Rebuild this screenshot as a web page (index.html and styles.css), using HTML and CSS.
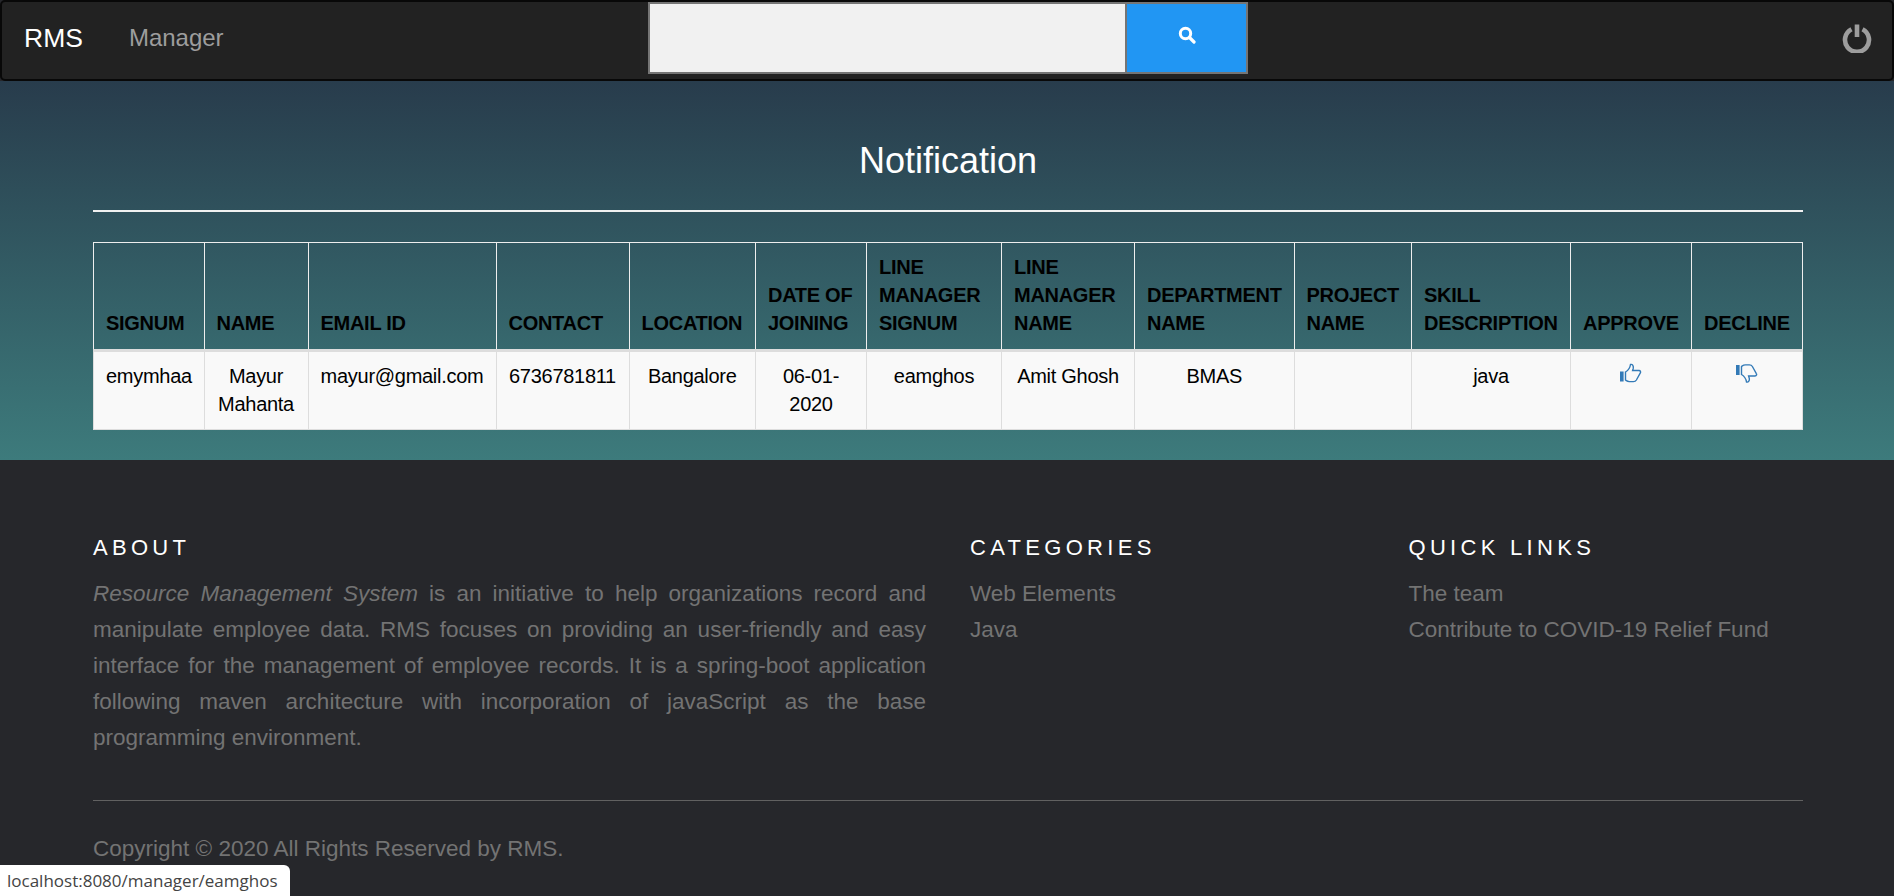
FILE: index.html
```html
<!DOCTYPE html>
<html lang="en">
<head>
    <meta charset="UTF-8">
    <meta name="viewport" content="width=device-width, initial-scale=1.0">
    <title>Notification</title>
    <link rel="stylesheet" href="styles.css">
</head>
<body>
    <nav class="navbar">
        <div class="nav-left">
            <a class="brand" href="#">RMS</a>
            <a class="nav-link" href="#">Manager</a>
        </div>
        <form class="search">
            <input class="search-input" type="text" aria-label="Search">
            <button class="search-btn" type="button" aria-label="Search">
                <svg class="search-icon" viewBox="0 0 18 18">
                    <circle cx="7.5" cy="7.5" r="5.2" fill="none" stroke="#fff" stroke-width="3"/>
                    <path d="M11.5 11.5L16 16" stroke="#fff" stroke-width="3.2" stroke-linecap="round"/>
                </svg>
            </button>
        </form>
        <a class="power" href="#" aria-label="Log out">
            <svg class="power-icon" viewBox="0 0 30 30">
                <path d="M9.5 6.2a12 12 0 1 0 11 0" fill="none" stroke="#9d9d9d" stroke-width="4.6"/>
                <path d="M15 1.5V14" stroke="#9d9d9d" stroke-width="4.6"/>
            </svg>
        </a>
    </nav>

    <main class="content">
        <h1 class="title">Notification</h1>
        <hr class="title-line">
        <table class="notif-table">
            <thead>
                <tr>
                    <th>SIGNUM</th>
                    <th>NAME</th>
                    <th>EMAIL ID</th>
                    <th>CONTACT</th>
                    <th>LOCATION</th>
                    <th>DATE OF JOINING</th>
                    <th>LINE MANAGER SIGNUM</th>
                    <th>LINE MANAGER NAME</th>
                    <th>DEPARTMENT NAME</th>
                    <th>PROJECT NAME</th>
                    <th>SKILL DESCRIPTION</th>
                    <th>APPROVE</th>
                    <th>DECLINE</th>
                </tr>
            </thead>
            <tbody>
                <tr>
                    <td>emymhaa</td>
                    <td>Mayur Mahanta</td>
                    <td>mayur@gmail.com</td>
                    <td>6736781811</td>
                    <td>Bangalore</td>
                    <td>06-01-2020</td>
                    <td>eamghos</td>
                    <td>Amit Ghosh</td>
                    <td>BMAS</td>
                    <td></td>
                    <td>java</td>
                    <td>
                        <a class="thumb" href="#" aria-label="Approve">
                            <svg viewBox="0 0 22 20">
                                <rect x="0" y="8.5" width="3.6" height="10" fill="#337ab7"/>
                                <path d="M5.5 9C8 7.5 10 5 10.5 1.5C12.5 1 13.8 3 13.2 5.5L12.6 7.5H19C20.6 7.5 21 9 20.2 10.2L16.4 17C15.8 18 14.8 18.6 13.4 18.6H9.4C7.4 18.6 6.4 17.6 5.5 17Z" fill="none" stroke="#337ab7" stroke-width="1.4"/>
                            </svg>
                        </a>
                    </td>
                    <td>
                        <a class="thumb" href="#" aria-label="Decline">
                            <svg viewBox="0 0 22 20">
                                <rect x="0" y="2" width="3.6" height="10" fill="#337ab7"/>
                                <path d="M5.5 11.5C8 13 10 15.5 10.5 19C12.5 19.5 13.8 17.5 13.2 15L12.6 13H19C20.6 13 21 11.5 20.2 10.3L16.4 3.5C15.8 2.5 14.8 1.9 13.4 1.9H9.4C7.4 1.9 6.4 2.9 5.5 3.5Z" fill="none" stroke="#337ab7" stroke-width="1.4"/>
                            </svg>
                        </a>
                    </td>
                </tr>
            </tbody>
        </table>
    </main>

    <footer class="site-footer">
        <div class="footer-cols">
            <div>
                <h6 class="footer-head">About</h6>
                <p class="about-text"><i>Resource Management System</i> is an initiative to help organizations record and manipulate employee data. RMS focuses on providing an user-friendly and easy interface for the management of employee records. It is a spring-boot application following maven architecture with incorporation of javaScript as the base programming environment.</p>
            </div>
            <div>
                <h6 class="footer-head">Categories</h6>
                <ul class="footer-links">
                    <li><a href="#">Web Elements</a></li>
                    <li><a href="#">Java</a></li>
                </ul>
            </div>
            <div>
                <h6 class="footer-head">Quick Links</h6>
                <ul class="footer-links">
                    <li><a href="#">The team</a></li>
                    <li><a href="#">Contribute to COVID-19 Relief Fund</a></li>
                </ul>
            </div>
        </div>
        <hr class="footer-line">
        <p class="copyright">Copyright © 2020 All Rights Reserved by RMS.</p>
    </footer>

    <!-- browser status bubble -->
    <div class="status-url">localhost:8080/manager/eamghos</div>
</body>
</html>
```

FILE: styles.css
```css
* {
    box-sizing: border-box;
}

html, body {
    height: 100%;
}

body {
    font-family: 'Liberation Sans', Arial, sans-serif;
    font-size: 20px;
    line-height: 28px;
    margin: 0;
    padding: 0;
    background-color: #26272b;
    overflow: hidden;
}

a {
    text-decoration: none;
}

.navbar {
    display: flex;
    align-items: center;
    position: relative;
    height: 81px;
    background-color: #222;
    border: 2px solid #080808;
    border-radius: 5px;
}

.nav-left {
    display: flex;
    align-items: center;
    width: 646px;
    padding-left: 22px;
    padding-bottom: 5px;
}

.brand {
    color: #fff;
    font-size: 26.5px;
}

.nav-link {
    color: #9d9d9d;
    font-size: 24px;
    margin-left: 46px;
}

.search {
    display: flex;
    width: 600px;
    height: 72px;
    margin-top: -6px;
    border: 2px solid #757575;
}

.search-input {
    flex: 1;
    border: none;
    border-right: 2px solid #757575;
    background-color: #f1f1f1;
    padding: 0;
}

.search-btn {
    display: flex;
    align-items: center;
    justify-content: center;
    width: 119px;
    padding: 0 0 6px;
    border: none;
    background-color: #2196f3;
}

.search-icon {
    width: 18px;
    height: 18px;
}

.power {
    display: flex;
    margin-left: auto;
    margin-right: 20px;
    margin-top: -5px;
}

.power-icon {
    width: 30px;
    height: 30px;
}

.content {
    height: 379px;
    padding: 54px 91px 0 93px;
    background: linear-gradient(#283c4c, #3d7b7c);
}

.title {
    margin: 0;
    color: #fff;
    font-size: 36px;
    font-weight: 400;
    line-height: 52px;
    text-align: center;
}

.title-line {
    margin: 23px 0 30px;
    border: none;
    border-top: 2px solid #f1f1f1;
}

.notif-table {
    width: 1709px;
    table-layout: fixed;
    border-collapse: collapse;
    color: #000;
    letter-spacing: -0.28px;
}

.notif-table th {
    padding: 10px 11px 12px 12px;
    border: 1px solid #eee;
    border-bottom: 3px solid #ddd;
    font-weight: 700;
    text-align: left;
    vertical-align: bottom;
}

.notif-table th:nth-child(1) { width: 110.5px; }
.notif-table th:nth-child(2) { width: 104px; }
.notif-table th:nth-child(3) { width: 188px; }
.notif-table th:nth-child(4) { width: 133px; }
.notif-table th:nth-child(5) { width: 126.5px; }
.notif-table th:nth-child(6) { width: 111px; }
.notif-table th:nth-child(7) { width: 135px; }
.notif-table th:nth-child(8) { width: 133px; }
.notif-table th:nth-child(9) { width: 159.5px; }
.notif-table th:nth-child(10) { width: 117.5px; }
.notif-table th:nth-child(11) { width: 159px; }
.notif-table th:nth-child(12) { width: 121px; }
.notif-table th:nth-child(13) { width: 111px; }

.notif-table td {
    padding: 10px 12px 11px;
    border: 1px solid #ddd;
    background-color: #f9f9f9;
    text-align: center;
    vertical-align: top;
}

.thumb {
    display: inline-block;
    height: 20px;
}

.thumb svg {
    display: block;
    width: 22px;
    height: 20px;
}

.site-footer {
    height: 436px;
    padding: 73px 91px 0 93px;
    background-color: #26272b;
    color: #737373;
    font-size: 22.5px;
    line-height: 36px;
}

.footer-cols {
    display: grid;
    grid-template-columns: 833px 394.5px 394.5px;
    gap: 44px;
}

.footer-head {
    margin: 0 0 13px;
    color: #fff;
    font-size: 22px;
    font-weight: 400;
    line-height: 30px;
    letter-spacing: 4.3px;
    text-transform: uppercase;
}

.about-text {
    margin: 0;
    text-align: justify;
}

.footer-links {
    margin: 0;
    padding: 0;
    list-style: none;
}

.footer-links a {
    color: #737373;
}

.footer-line {
    width: 1710px;
    margin: 44px 0 0;
    border: none;
    border-top: 1px solid #616161;
}

.copyright {
    margin: 30px 0 0;
}

.status-url {
    position: absolute;
    left: 0;
    bottom: 0;
    width: 290px;
    height: 31px;
    padding-left: 7px;
    background-color: #fff;
    border-top-right-radius: 6px;
    color: #444;
    font-family: 'Open Sans', sans-serif;
    font-size: 17px;
    line-height: 31px;
}
```
